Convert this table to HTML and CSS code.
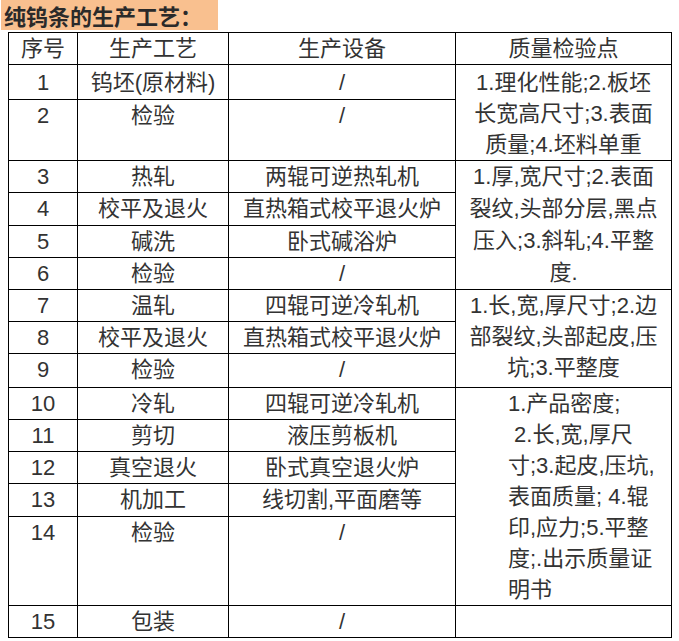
FILE: index.html
```html
<!DOCTYPE html>
<html lang="zh-CN">
<head>
<meta charset="utf-8">
<title>纯钨条的生产工艺</title>
<link rel="stylesheet" href="styles.css">
</head>
<body>
<div class="page">
  <div class="title"><span class="title-text">纯钨条的生产工艺：</span></div>
  <table class="proc">
    <colgroup>
      <col class="c-no"><col class="c-step"><col class="c-equip"><col class="c-qc">
    </colgroup>
    <thead>
      <tr class="r-head"><th>序号</th><th>生产工艺</th><th>生产设备</th><th>质量检验点</th></tr>
    </thead>
    <tbody>
      <tr class="r1"><td>1</td><td>钨坯(原材料)</td><td>/</td><td rowspan="2" class="qc">1.理化性能;2.板坯<br>长宽高尺寸;3.表面<br>质量;4.坯料单重</td></tr>
      <tr class="r2"><td>2</td><td>检验</td><td>/</td></tr>
      <tr class="r"><td>3</td><td>热轧</td><td>两辊可逆热轧机</td><td rowspan="4" class="qc qc2">1.厚,宽尺寸;2.表面<br>裂纹,头部分层,黑点<br>压入;3.斜轧;4.平整<br>度.</td></tr>
      <tr class="r"><td>4</td><td>校平及退火</td><td>直热箱式校平退火炉</td></tr>
      <tr class="r"><td>5</td><td>碱洗</td><td>卧式碱浴炉</td></tr>
      <tr class="r"><td>6</td><td>检验</td><td>/</td></tr>
      <tr class="r"><td>7</td><td>温轧</td><td>四辊可逆冷轧机</td><td rowspan="3" class="qc">1.长,宽,厚尺寸;2.边<br>部裂纹,头部起皮,压<br>坑;3.平整度</td></tr>
      <tr class="r"><td>8</td><td>校平及退火</td><td>直热箱式校平退火炉</td></tr>
      <tr class="r9"><td>9</td><td>检验</td><td>/</td></tr>
      <tr class="r"><td>10</td><td>冷轧</td><td>四辊可逆冷轧机</td><td rowspan="5" class="qc qc4">1.产品密度;<br>&nbsp;2.长,宽,厚尺<br>寸;3.起皮,压坑,<br>表面质量; 4.辊<br>印,应力;5.平整<br>度;.出示质量证<br>明书</td></tr>
      <tr class="r"><td>11</td><td>剪切</td><td>液压剪板机</td></tr>
      <tr class="r"><td>12</td><td>真空退火</td><td>卧式真空退火炉</td></tr>
      <tr class="r"><td>13</td><td>机加工</td><td>线切割,平面磨等</td></tr>
      <tr class="r14"><td>14</td><td>检验</td><td>/</td></tr>
      <tr class="r15"><td>15</td><td>包装</td><td>/</td><td></td></tr>
    </tbody>
  </table>
</div>
</body>
</html>
```

FILE: styles.css
```css
html, body {
  margin: 0;
  padding: 0;
  background: #fff;
}

.page {
  padding: 0 0 0 1px;
  font-family: "Liberation Sans", "Noto Sans CJK SC", sans-serif;
  color: #333;
}

.title {
  display: inline-block;
  background: #f9c08f;
  color: #2a2a2a;
  font-weight: bold;
  font-size: 22px;
  line-height: 30px;
  padding: 0 16px 0 3px;
  font-family: "Noto Sans CJK SC", sans-serif;
  vertical-align: top;
}

.title-text {
  display: inline-block;
  line-height: 30px;
}

.proc {
  margin: 2px 0 0 7px;
  border-collapse: collapse;
  table-layout: fixed;
  width: 663px;
  font-size: 22px;
  line-height: 31px;
}

.c-no { width: 69px; }
.c-step { width: 151px; }
.c-equip { width: 227px; }
.c-qc { width: 216px; }

.proc th,
.proc td {
  border: 1px solid #000;
  padding: 0;
  text-align: center;
  vertical-align: top;
  font-weight: normal;
  white-space: nowrap;
}

.r-head { height: 32px; }
.r-head th { vertical-align: middle; }
.r1 { height: 35px; }
.r1 td { padding-top: 2px; }
.r2 { height: 60px; }
.r { height: 32px; }
.r9 { height: 34px; }
.r14 { height: 89px; }
.r15 { height: 31px; }

.qc { padding-top: 0; }
.qc2 { line-height: 32px; }
.proc td.qc4 {
  text-align: left;
  padding-left: 52px;
  line-height: 31px;
}
```
